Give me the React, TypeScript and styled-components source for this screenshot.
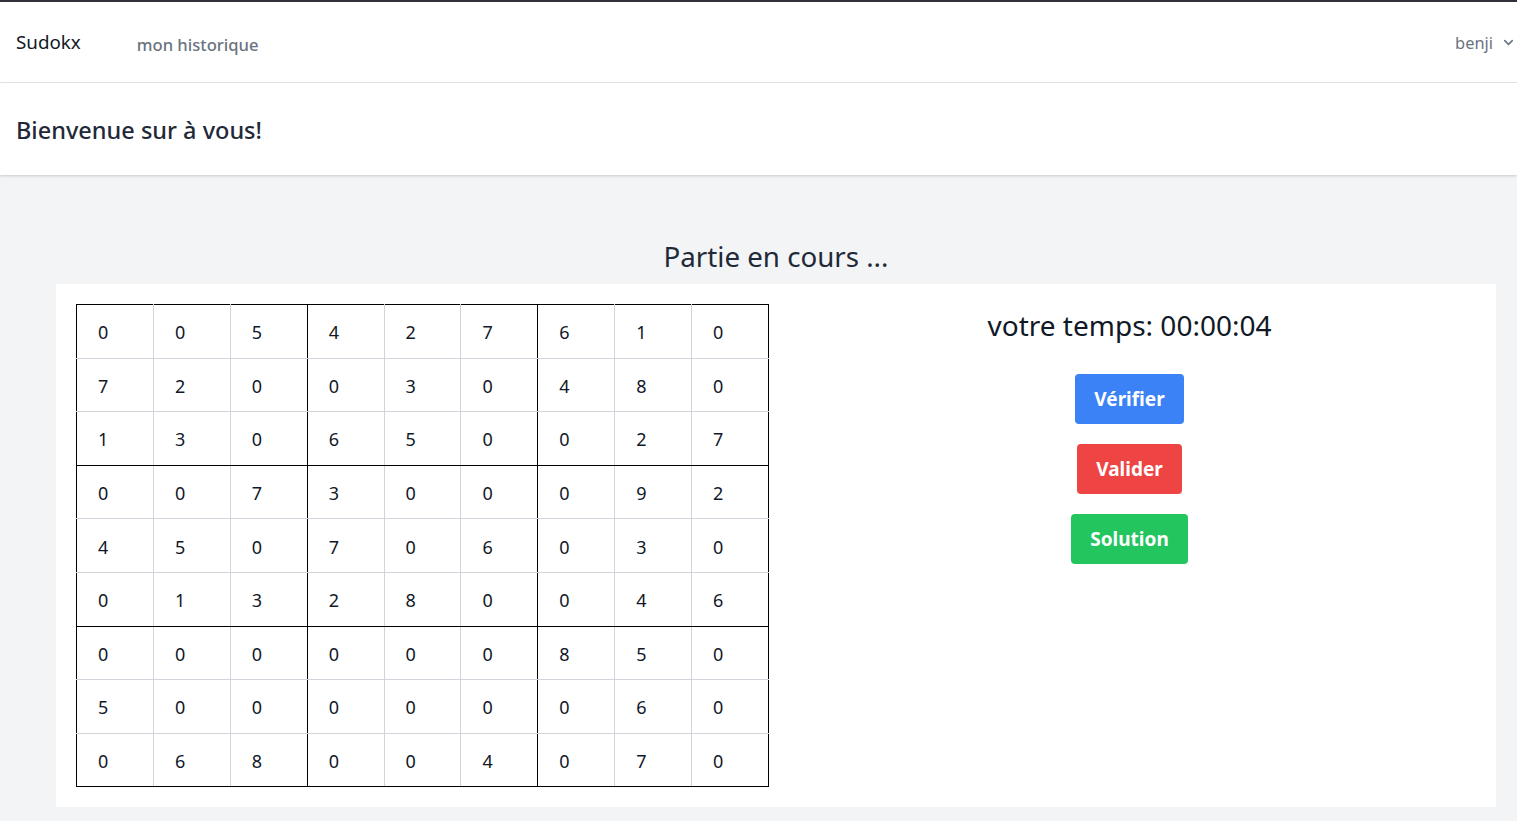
import React from "react";
import styled, { createGlobalStyle } from "styled-components";

const Global = createGlobalStyle`
  html, body { margin: 0; padding: 0; background: #f3f4f6; }
  body { font-family: "Noto Sans", "Open Sans", sans-serif; color: #111827; }
  * { box-sizing: border-box; }
`;

const Page = styled.div`
  min-height: 821px;
  border-top: 2px solid #2f303a;
  background: #f3f4f6;
`;

const Nav = styled.nav`
  height: 81px;
  background: #fff;
  border-bottom: 1px solid #e5e7eb;
  display: flex;
  align-items: center;
  padding: 0 0 0 16px;
`;

const Brand = styled.div`
  font-size: 18.8px;
  color: #111827;
  margin-top: 0px;
`;

const NavLink = styled.a`
  margin-left: 56px;
  font-size: 16.6px;
  font-weight: 500;
  color: #6b7280;
  text-decoration: none;
  margin-top: 4px;
`;

const User = styled.div`
  margin-left: auto;
  display: flex;
  align-items: center;
  gap: 8px;
  font-size: 16.4px;
  color: #6b7280;
  padding-right: 1px;
  margin-top: 1px;
`;

const Header = styled.header`
  height: 92px;
  background: #fff;
  box-shadow: 0 1px 3px rgba(0, 0, 0, 0.12), 0 1px 2px rgba(0, 0, 0, 0.06);
  display: flex;
  align-items: center;
  padding: 0 16px;
  position: relative;
`;

const HeaderTitle = styled.h1`
  margin: 0;
  margin-top: 2px;
  font-size: 23.5px;
  font-weight: 500;
  color: #1f2937;
`;

const Main = styled.main`
  padding: 63px 21px 14px 56px;
  display: flex;
  flex-direction: column;
  align-items: center;
`;

const GameTitle = styled.h2`
  margin: 0 0 10px;
  font-size: 27.7px;
  line-height: 36px;
  font-weight: 400;
  color: #1f2937;
`;

const Card = styled.section`
  align-self: stretch;
  background: #fff;
  padding: 20px 20px 20px 20px;
  display: flex;
  align-items: flex-start;
`;

const Board = styled.table`
  border-collapse: collapse;
  border: 1px solid #000;
  width: 693px;
  table-layout: fixed;
`;

const Cell = styled.td<{ $thickRight: boolean; $thickBottom: boolean }>`
  height: 53.6px;
  padding: 2px 0 0 21px;
  font-size: 18px;
  color: #111827;
  border-right: 1px solid ${(p) => (p.$thickRight ? "#000" : "#d1d5db")};
  border-bottom: 1px solid ${(p) => (p.$thickBottom ? "#000" : "#d1d5db")};
`;

const Side = styled.div`
  flex: 1;
  display: flex;
  flex-direction: column;
  align-items: center;
  padding-left: 14px;
  padding-top: 3px;
`;

const Timer = styled.div`
  font-size: 28px;
  line-height: 36px;
  color: #111827;
  margin-bottom: 31px;
`;

const Buttons = styled.div`
  display: flex;
  flex-direction: column;
  align-items: center;
  gap: 20px;
`;

const Button = styled.button<{ $bg: string }>`
  height: 50px;
  padding: 0 19px;
  border: none;
  border-radius: 4px;
  background: ${(p) => p.$bg};
  color: #fff;
  font-family: inherit;
  font-size: 19px;
  font-weight: 700;
`;

const grid = [
  [0, 0, 5, 4, 2, 7, 6, 1, 0],
  [7, 2, 0, 0, 3, 0, 4, 8, 0],
  [1, 3, 0, 6, 5, 0, 0, 2, 7],
  [0, 0, 7, 3, 0, 0, 0, 9, 2],
  [4, 5, 0, 7, 0, 6, 0, 3, 0],
  [0, 1, 3, 2, 8, 0, 0, 4, 6],
  [0, 0, 0, 0, 0, 0, 8, 5, 0],
  [5, 0, 0, 0, 0, 0, 0, 6, 0],
  [0, 6, 8, 0, 0, 4, 0, 7, 0],
];

export default function App() {
  return (
    <Page>
      <Global />
      <Nav>
        <Brand>Sudokx</Brand>
        <NavLink href="#">mon historique</NavLink>
        <User>
          benji
          <svg width="15" height="15" viewBox="0 0 24 24" fill="none" stroke="#6b7280" strokeWidth="2.5" strokeLinecap="round" strokeLinejoin="round">
            <path d="M6 9l6 6 6-6" />
          </svg>
        </User>
      </Nav>
      <Header>
        <HeaderTitle>Bienvenue sur à vous!</HeaderTitle>
      </Header>
      <Main>
        <GameTitle>Partie en cours ...</GameTitle>
        <Card>
          <Board>
            <tbody>
              {grid.map((row, r) => (
                <tr key={r}>
                  {row.map((v, c) => (
                    <Cell key={c} $thickRight={c % 3 === 2} $thickBottom={r % 3 === 2}>
                      {v}
                    </Cell>
                  ))}
                </tr>
              ))}
            </tbody>
          </Board>
          <Side>
            <Timer>votre temps: 00:00:04</Timer>
            <Buttons>
              <Button $bg="#3b82f6">Vérifier</Button>
              <Button $bg="#ef4444">Valider</Button>
              <Button $bg="#22c55e">Solution</Button>
            </Buttons>
          </Side>
        </Card>
      </Main>
    </Page>
  );
}
